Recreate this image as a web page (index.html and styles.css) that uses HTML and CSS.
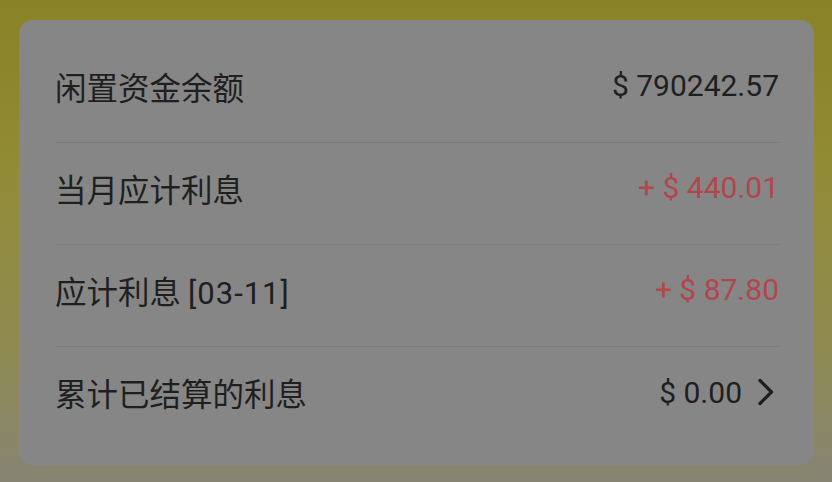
FILE: index.html
```html
<!DOCTYPE html>
<html lang="zh-CN">
<head>
<meta charset="utf-8">
<title>利息</title>
<link rel="stylesheet" href="styles.css">
</head>
<body>
<div class="screen">
  <div class="card">
    <div class="row">
      <span class="label">闲置资金余额</span>
      <span class="value">$ 790242.57</span>
    </div>
    <div class="row">
      <span class="label">当月应计利息</span>
      <span class="value red">+ $ 440.01</span>
    </div>
    <div class="row">
      <span class="label">应计利息 <span class="num">[03-11]</span></span>
      <span class="value red">+ $ 87.80</span>
    </div>
    <div class="row last">
      <span class="label">累计已结算的利息</span>
      <span class="value">$ 0.00
        <svg class="chev" width="18" height="28" viewBox="0 0 18 28"><path d="M3 2.5 L14.5 14 L3 25.5" fill="none" stroke="#1e1e1e" stroke-width="3.2" stroke-linecap="round" stroke-linejoin="round"/></svg>
      </span>
    </div>
  </div>
</div>
</body>
</html>
```
FILE: styles.css
```css
* { box-sizing: border-box; }
html, body { margin: 0; padding: 0; }
body {
  width: 832px;
  height: 482px;
  overflow: hidden;
  background: linear-gradient(180deg, #8a8226 0%, #918b35 35%, #8e8a4f 70%, #868472 100%);
  font-family: Roboto, "Noto Sans CJK SC", sans-serif;
}
.screen {
  padding: 20px 18px 0 19px;
}
.card {
  height: 445px;
  background: #868686;
  border-radius: 14px;
  padding: 21px 0 0;
}
.row {
  height: 102px;
  margin: 0 35px 0 36px;
  padding-bottom: 12px;
  display: flex;
  align-items: center;
  justify-content: space-between;
  border-bottom: 1px solid #7b7b7b;
}
.row.last { border-bottom: none; }
.label {
  font-family: "Noto Sans CJK SC", sans-serif;
  font-size: 31.5px;
  color: #1f1f1f;
}
.label .num {
  font-family: Roboto, sans-serif;
  font-size: 31px;
  letter-spacing: 1px;
}
.value {
  font-size: 30px;
  color: #1f1f1f;
  display: flex;
  align-items: center;
  gap: 15px;
}
.value.red { color: #b2464d; }
.chev { display: block; margin-right: 4px; }
```
